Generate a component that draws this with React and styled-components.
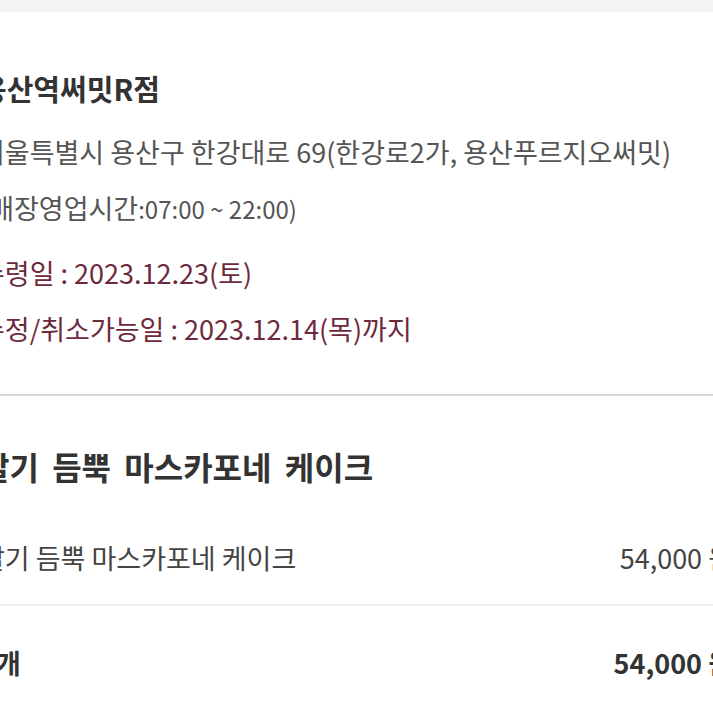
import styled, { createGlobalStyle } from "styled-components";

const GlobalStyle = createGlobalStyle`
  html, body {
    margin: 0;
    padding: 0;
    background: #ffffff;
  }
  body {
    font-family: "Noto Sans CJK KR", "Noto Sans", sans-serif;
    color: #333333;
  }
`;

const Viewport = styled.div`
  width: 713px;
  height: 713px;
  overflow: hidden;
  background: #ffffff;
`;

const TopBand = styled.div`
  height: 12px;
  background: #f3f3f3;
`;

// content is wider than the window; the screenshot was cropped on both sides
const Content = styled.div`
  margin: 0 -20px 0 -20px;
`;

const StoreSection = styled.section`
  display: flex;
  flex-direction: column;
  gap: 28px;
  padding: 58px 0 47px;
  border-bottom: 2px solid #d8d8d8;
`;

const StoreName = styled.h2`
  margin: 0;
  font-size: 29px;
  line-height: 36px;
  font-weight: 700;
  color: #333333;
`;

const LineGroup = styled.div`
  display: flex;
  flex-direction: column;
  gap: 20px;
`;

const InfoLine = styled.p`
  margin: 0;
  font-size: 27px;
  line-height: 36px;
  font-weight: 400;
  color: ${(p) => (p.$accent ? "#6d2a3c" : "#555555")};
  white-space: nowrap;
`;

const TimeRange = styled.span`
  font-size: 24px;
`;

const ProductSection = styled.section`
  padding: 50px 0 28px;
  border-bottom: 2px solid #f0f0f0;
`;

const ProductTitle = styled.h3`
  margin: 0 0 54px;
  font-size: 32px;
  line-height: 40px;
  font-weight: 700;
  color: #333333;
  word-spacing: 6px;
  white-space: nowrap;
`;

const Row = styled.div`
  display: flex;
  justify-content: space-between;
  align-items: center;
  font-size: 27px;
  line-height: 36px;
  font-weight: ${(p) => (p.$strong ? 700 : 400)};
  color: ${(p) => (p.$strong ? "#333333" : "#444444")};
  white-space: nowrap;
`;

const TotalSection = styled.section`
  padding-top: 39px;
`;

export default function App() {
  return (
    <Viewport>
      <GlobalStyle />
      <TopBand />
      <Content>
        <StoreSection>
          <StoreName>용산역써밋R점</StoreName>
          <LineGroup>
            <InfoLine>서울특별시 용산구 한강대로 69(한강로2가, 용산푸르지오써밋)</InfoLine>
            <InfoLine>
              (매장영업시간<TimeRange>:07:00 ~ 22:00)</TimeRange>
            </InfoLine>
          </LineGroup>
          <LineGroup>
            <InfoLine $accent>수령일 : 2023.12.23(토)</InfoLine>
            <InfoLine $accent>수정/취소가능일 : 2023.12.14(목)까지</InfoLine>
          </LineGroup>
        </StoreSection>
        <ProductSection>
          <ProductTitle>딸기 듬뿍 마스카포네 케이크</ProductTitle>
          <Row>
            <span>딸기 듬뿍 마스카포네 케이크</span>
            <span>54,000 원</span>
          </Row>
        </ProductSection>
        <TotalSection>
          <Row $strong>
            <span>1개</span>
            <span>54,000 원</span>
          </Row>
        </TotalSection>
      </Content>
    </Viewport>
  );
}
